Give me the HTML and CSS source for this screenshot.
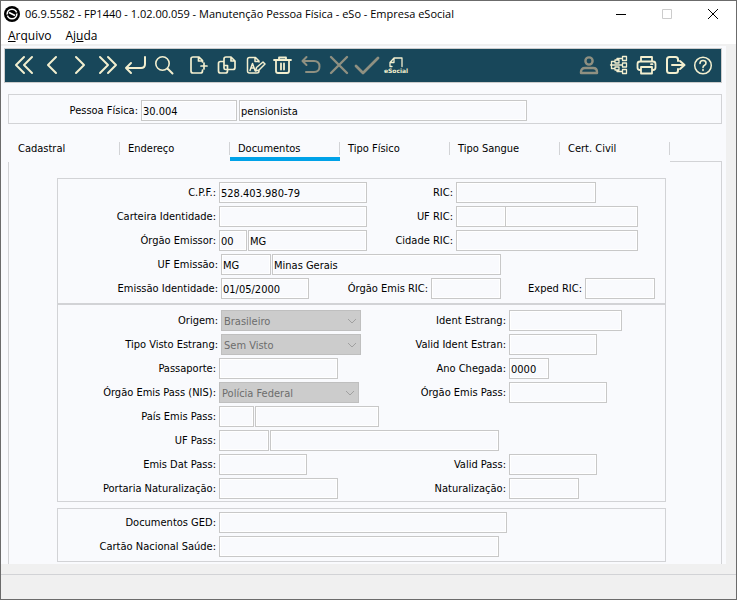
FILE: index.html
```html
<!DOCTYPE html>
<html lang="pt-BR">
<head>
    <meta charset="UTF-8">
    <meta name="viewport" content="width=device-width, initial-scale=1.0">
    <title>Manutenção Pessoa Física</title>
    <link rel="stylesheet" href="styles.css">
</head>
<body>

<div class="window">
    <!-- Title bar -->
    <header class="titlebar">
        <svg class="app-icon" width="16" height="16" viewBox="0 0 16 16">
            <circle cx="8" cy="8" r="8" fill="#000"/>
            <circle cx="8" cy="8" r="4.800" fill="none" stroke="#fff" stroke-width="1.600"/>
            <path d="M5 6.500l6 3" stroke="#fff" stroke-width="1.600"/>
            <path d="M11 7.500 14 6.500M5 8.500 2 9.500" stroke="#000" stroke-width="1.200"/>
        </svg>
        <h1>06.9.5582 - FP1440 - 1.02.00.059 - Manutenção Pessoa Física - eSo - Empresa eSocial</h1>
        <div class="window-buttons">
            <button type="button" aria-label="Minimizar"><svg width="12" height="12" viewBox="0 0 12 12"><path d="M1 6.5h10"/></svg></button>
            <button type="button" aria-label="Maximizar" disabled><svg width="12" height="12" viewBox="0 0 12 12"><path d="M1.5 1.5h9v9h-9z"/></svg></button>
            <button type="button" aria-label="Fechar"><svg width="12" height="12" viewBox="0 0 12 12"><path d="M1 1l10 10M11 1 1 11"/></svg></button>
        </div>
    </header>

    <nav class="menubar">
        <button type="button"><u>A</u>rquivo</button>
        <button type="button">Aj<u>u</u>da</button>
    </nav>

    <main class="client">
        <!-- Toolbar -->
        <div class="toolbar">
            <button type="button" aria-label="Primeiro"><svg viewBox="0 0 28 28"><path d="M14 6l-8 8 8 8M22 6l-8 8 8 8"/></svg></button>
            <button type="button" aria-label="Anterior"><svg viewBox="0 0 28 28"><path d="M18 6l-8 8 8 8"/></svg></button>
            <button type="button" aria-label="Próximo"><svg viewBox="0 0 28 28"><path d="M10 6l8 8-8 8"/></svg></button>
            <button type="button" aria-label="Último"><svg viewBox="0 0 28 28"><path d="M6 6l8 8-8 8M14 6l8 8-8 8"/></svg></button>
            <button type="button" aria-label="Vai para"><svg viewBox="0 0 28 28"><path d="M23 6v7q0 4-4 4H4M9 12l-5 5 5 5"/></svg></button>
            <button type="button" aria-label="Pesquisa"><svg viewBox="0 0 28 28"><circle cx="12.500" cy="12.500" r="6.700" stroke-width="1.600"/><path d="M17.500 17.500l5 5"/></svg></button>
            <span class="toolbar-gap"></span>
            <button type="button" aria-label="Inclui"><svg viewBox="0 0 28 28"><g stroke-width="1.700"><path d="M17.500 11V9.500L14 6H8Q6 6 6 8v12q0 2 2 2h7.500q2 0 2-2v-1M13.500 6v4h4M19 12v6M16 15h6"/></g></svg></button>
            <button type="button" aria-label="Copia"><svg viewBox="0 0 28 28"><g stroke-width="1.700"><path d="M11 10.500H7.500q-2 0-2 2V20q0 2 2 2h5q2 0 2-2v-1.500M12.500 18.500q-1.500 0-1.500-1.500V8q0-2 2-2h5l4 4v6.500q0 2-2 2zM18 6v4h4M11 11v3.500h3.500V18"/></g></svg></button>
            <button type="button" aria-label="Altera"><svg viewBox="0 0 28 28"><g stroke-width="1.500"><path d="M18 11V10l-3.500-3.500H8.500q-2 0-2 2V20q0 2 2 2H16q2 0 2-2v-1M14 6.500v4h4M9 19.500l2.500-7 2.500 7M10 17h3M14.500 20l1-3.500 6.500-5.500 2 2-6 6z"/></g></svg></button>
            <button type="button" aria-label="Elimina"><svg viewBox="0 0 28 28"><path d="M5 9h17M10 8V6.500h7V8M7 10v10q0 2 2 2h9q2 0 2-2V10M12 12.500v6M15 12.500v6" stroke-width="1.800"/></svg></button>
            <button type="button" aria-label="Desfaz" disabled><svg viewBox="0 0 28 28"><path d="M9.500 6 5.500 10l4 4M6 10h11q5.500 0 5.500 5.500T17 21H9"/></svg></button>
            <button type="button" aria-label="Cancela" disabled><svg viewBox="0 0 28 28"><g stroke-width="2.400"><path d="M6 6l16 16M22 6 6 22"/></g></svg></button>
            <button type="button" aria-label="Confirma" disabled><svg viewBox="0 0 28 28"><g stroke-width="2.800"><path d="M3 15l7 7L25 7"/></g></svg></button>
            <button type="button" aria-label="eSocial"><svg viewBox="0 0 28 28"><path d="M9 15.500v-4l4-4.500h8v8.500M13 7v4.500H9M9 15.500h2" stroke-width="1.300"/><text x="15" y="22" text-anchor="middle">eSocial</text></svg></button>
            <span class="toolbar-fill"></span>
            <button type="button" aria-label="Usuário" disabled><svg viewBox="0 0 28 28"><g stroke-width="2.400"><circle cx="12" cy="10" r="3.600"/><path d="M4 22v-1q0-4 4-4h8q4 0 4 4v1z"/></g></svg></button>
            <button type="button" aria-label="Estrutura"><svg viewBox="0 0 28 28"><g stroke-width="1.300"><path d="M17.500 5.500h4v4h-4zM17.500 12h4v4h-4zM17.500 18.500h4v4h-4zM10 9h4v3h-4zM10 16h4v3h-4zM10 10.500H6.500v7H10M5.500 14h12M12 9V7.500h5.500M12 19v1.500h5.500"/></g></svg></button>
            <button type="button" aria-label="Imprime"><svg viewBox="0 0 28 28"><path d="M8 10V6h11v4M8 19H7q-2.500 0-2.500-2.500V13q0-2.500 2.500-2.500h13q2.500 0 2.500 2.500v3.500Q22.500 19 20 19h-1M8 16h11v6.500H8zM18 13.200h1.500" stroke-width="1.800"/></svg></button>
            <button type="button" aria-label="Sair"><svg viewBox="0 0 28 28"><path d="M17 10V8.500Q17 6 14.500 6h-6Q6 6 6 8.500v11Q6 22 8.500 22h6q2.500 0 2.500-2.500V18M11 14h12M19 10l4.500 4-4.500 4"/></svg></button>
            <button type="button" aria-label="Ajuda"><svg viewBox="0 0 28 28"><circle cx="14" cy="14.500" r="8.300" stroke-width="1.500"/><path d="M11 12.500q0-3 3-3t3 2.500q0 1.500-1.500 2.300T14 16.500M14 18.500v1" stroke-width="1.600"/></svg></button>
        </div>

        <div class="person">
            <label for="pessoa">Pessoa Física:</label>
            <input id="pessoa" class="w-96" type="text" value="30.004">
            <input class="w-288" type="text" value="pensionista" aria-label="Nome">
        </div>

        <div class="tabs" role="tablist">
            <button type="button" role="tab">Cadastral</button>
            <button type="button" role="tab">Endereço</button>
            <button type="button" role="tab" class="active" aria-selected="true">Documentos</button>
            <button type="button" role="tab">Tipo Físico</button>
            <button type="button" role="tab">Tipo Sangue</button>
            <button type="button" role="tab">Cert. Civil</button>
            <span class="tabs-fill"></span>
        </div>

        <form class="tab-page">
            <!-- Identity -->
            <div class="group identity">
                <div class="row">
                    <div class="pair"><label for="cpf">C.P.F.:</label><input id="cpf" class="w-148" type="text" value="528.403.980-79"></div>
                    <label for="ric">RIC:</label>
                    <div class="fields"><input id="ric" class="w-140" type="text"></div>
                </div>
                <div class="row">
                    <div class="pair"><label for="carteira">Carteira Identidade:</label><input id="carteira" class="w-148" type="text"></div>
                    <label for="uf-ric">UF RIC:</label>
                    <div class="fields joined"><input id="uf-ric" class="w-50" type="text"><input class="w-133" type="text" aria-label="Nome UF RIC"></div>
                </div>
                <div class="row">
                    <div class="pair"><label for="orgao">Órgão Emissor:</label><input id="orgao" class="w-28" type="text" value="00"><input class="w-119" type="text" value="MG" aria-label="UF órgão emissor"></div>
                    <label for="cidade">Cidade RIC:</label>
                    <div class="fields"><input id="cidade" class="w-182" type="text"></div>
                </div>
                <div class="row">
                    <div class="pair wide"><label for="uf-emissao">UF Emissão:</label><input id="uf-emissao" class="w-50" type="text" value="MG"><input class="w-229" type="text" value="Minas Gerais" aria-label="Nome UF emissão"></div>
                </div>
                <div class="row dates">
                    <div class="pair wide"><label for="emissao">Emissão Identidade:</label><input id="emissao" class="w-88" type="text" value="01/05/2000"></div>
                    <label for="orgao-ric">Órgão Emis RIC:</label>
                    <input id="orgao-ric" class="w-70" type="text">
                    <label for="exped">Exped RIC:</label>
                    <input id="exped" class="w-70" type="text">
                </div>
            </div>

            <!-- Foreigner / passport -->
            <div class="group passport">
                <div class="row">
                    <div class="pair wide">
                        <label for="origem">Origem:</label>
                        <div class="select"><select id="origem" disabled><option>Brasileiro</option></select><svg width="10" height="6" viewBox="0 0 10 6"><path d="M1 1l4 4 4-4"/></svg></div>
                    </div>
                    <label for="ident">Ident Estrang:</label>
                    <div class="fields"><input id="ident" class="w-113" type="text"></div>
                </div>
                <div class="row">
                    <div class="pair wide">
                        <label for="visto">Tipo Visto Estrang:</label>
                        <div class="select"><select id="visto" disabled><option>Sem Visto</option></select><svg width="10" height="6" viewBox="0 0 10 6"><path d="M1 1l4 4 4-4"/></svg></div>
                    </div>
                    <label for="valid-ident">Valid Ident Estran:</label>
                    <div class="fields"><input id="valid-ident" class="w-88" type="text"></div>
                </div>
                <div class="row">
                    <div class="pair"><label for="passaporte">Passaporte:</label><input id="passaporte" class="w-119" type="text"></div>
                    <label for="chegada">Ano Chegada:</label>
                    <div class="fields"><input id="chegada" class="w-40" type="text" value="0000"></div>
                </div>
                <div class="row">
                    <div class="pair">
                        <label for="nis">Órgão Emis Pass (NIS):</label>
                        <div class="select"><select id="nis" disabled><option>Polícia Federal</option></select><svg width="10" height="6" viewBox="0 0 10 6"><path d="M1 1l4 4 4-4"/></svg></div>
                    </div>
                    <label for="orgao-pass">Órgão Emis Pass:</label>
                    <div class="fields"><input id="orgao-pass" class="w-98" type="text"></div>
                </div>
                <div class="row">
                    <div class="pair"><label for="pais">País Emis Pass:</label><input id="pais" class="w-35" type="text"><input class="w-124" type="text" aria-label="Nome do país"></div>
                </div>
                <div class="row">
                    <div class="pair"><label for="uf-pass">UF Pass:</label><input id="uf-pass" class="w-50" type="text"><input class="w-229" type="text" aria-label="Nome UF pass"></div>
                </div>
                <div class="row">
                    <div class="pair"><label for="emis-pass">Emis Dat Pass:</label><input id="emis-pass" class="w-88" type="text"></div>
                    <label for="valid-pass">Valid Pass:</label>
                    <div class="fields"><input id="valid-pass" class="w-88" type="text"></div>
                </div>
                <div class="row">
                    <div class="pair"><label for="portaria">Portaria Naturalização:</label><input id="portaria" class="w-119" type="text"></div>
                    <label for="natural">Naturalização:</label>
                    <div class="fields"><input id="natural" class="w-70" type="text"></div>
                </div>
            </div>

            <div class="group health">
                <div class="row">
                    <div class="pair"><label for="ged">Documentos GED:</label><input id="ged" class="w-288" type="text"></div>
                </div>
                <div class="row">
                    <div class="pair"><label for="cns">Cartão Nacional Saúde:</label><input id="cns" class="w-280" type="text"></div>
                </div>
            </div>
        </form>
    </main>

    <footer class="statusbar"></footer>
</div>

</body>
</html>
```
FILE: styles.css
```css
* {
    box-sizing: border-box;
}
body {
    margin: 0;
    font-family: "DejaVu Sans Condensed", "DejaVu Sans", sans-serif;
    font-size: 11px;
    color: #000;
}
button, input, select {
    font: inherit;
    color: inherit;
    margin: 0;
}
button {
    background: none;
    border: none;
    padding: 0;
}
.window {
    display: flex;
    flex-direction: column;
    min-height: 100vh;
    border: 1px solid #6b6b6b;
    background: #f0f0f0;
}

/* Title and menu */
.titlebar {
    display: flex;
    align-items: center;
    height: 25px;
    padding-left: 3px;
    gap: 5px;
    background: #fff;
}
.titlebar h1 {
    flex: 1;
    margin: 0;
    font-family: "Open Sans", sans-serif;
    font-size: 11px;
    font-weight: 400;
    white-space: nowrap;
}
.window-buttons {
    display: flex;
}
.window-buttons button {
    display: flex;
    justify-content: center;
    width: 46px;
}
.window-buttons path {
    fill: none;
    stroke: #000;
}
.window-buttons button:disabled path {
    stroke: #ccc;
}
.menubar {
    display: flex;
    gap: 14px;
    height: 18px;
    padding-left: 7px;
    background: #fff;
    font-family: "Open Sans", sans-serif;
    font-size: 12px;
    line-height: 20px;
}

/* Client area */
.client {
    margin: 2px 10px 0 0;
    padding: 2px 4px 0 3px;
    background: #f9fafd;
}
.toolbar {
    display: flex;
    align-items: flex-start;
    height: 35px;
    padding: 2px 4px 0 5px;
    border: 1px solid #ccc;
    background: #18475a;
}
.toolbar button {
    width: 28px;
    height: 28px;
    color: #f3efcf;
}
.toolbar button:disabled {
    color: #8f9081;
}
.toolbar svg {
    display: block;
    fill: none;
    stroke: currentColor;
    stroke-width: 2;
    stroke-linecap: round;
    stroke-linejoin: round;
}
.toolbar text {
    fill: currentColor;
    stroke: none;
    font: bold 6px "DejaVu Sans", sans-serif;
}
.toolbar-gap {
    width: 7px;
}
.toolbar-fill {
    flex: 1;
}

input {
    height: 21px;
    padding: 2px 2px 0 1px;
    border: 1px solid #c8c8c8;
    border-radius: 0;
    background: #f9fafd;
    box-shadow: inset 0 0 0 1px #fff;
}
label {
    padding-right: 3px;
    text-align: right;
    white-space: nowrap;
}
.person {
    display: flex;
    align-items: center;
    height: 30px;
    margin: 11px 0 0 4px;
    padding-top: 3px;
    border: 1px solid #d2d3d6;
}
.person label {
    width: 132px;
}
.person input + input {
    margin-left: 2px;
}

/* Tabs */
.tabs {
    display: flex;
    height: 20px;
    margin: 18px 0 0 4px;
}
.tabs button {
    display: flex;
    width: 110px;
    height: 19px;
    padding-left: 8px;
    border-bottom: 4px solid transparent;
    line-height: 13px;
}
.tabs button:first-child {
    width: 112px;
    padding-left: 10px;
}
.tabs button::after {
    content: "";
    height: 13px;
    margin-left: auto;
    border-right: 1px solid #d2d3d6;
}
.tabs .active {
    border-color: #00a2e8;
}
.tabs-fill {
    flex: 1;
    border-bottom: 1px solid #d2d3d6;
}
.tab-page {
    margin-left: 4px;
    padding: 16px 55px 2px 48px;
    border: solid #d2d3d6;
    border-width: 0 1px;
}

/* Field groups */
.group {
    display: grid;
    gap: 3px;
    border: 1px solid #d2d3d6;
    padding: 3px 0 4px;
}
.passport {
    padding: 5px 0 2px;
    margin-bottom: 6px;
}
.row {
    display: grid;
    align-items: center;
    height: 21px;
}
.identity .row {
    grid-template-columns: 310px 88px 1fr;
}
.passport .row {
    grid-template-columns: 322px 129px 1fr;
}
.identity .dates {
    grid-template-columns: 252px 121px 70px 84px 70px;
}
.pair {
    display: flex;
    align-items: center;
}
.pair label {
    flex: none;
    width: 161px;
}
.pair.wide label {
    width: 163px;
}
.pair input {
    flex: none;
}
.pair input + input {
    margin-left: 1px;
}
.fields {
    display: flex;
}
.joined input + input {
    margin-left: -1px;
}

.select {
    position: relative;
    width: 140px;
}
.select select {
    display: block;
    width: 100%;
    height: 21px;
    padding: 1px 2px 0 2px;
    border: 1px solid #bfbfbf;
    border-radius: 0;
    background: #ccc;
    color: #6d6d6d;
    opacity: 1;
    appearance: none;
}
.select svg {
    position: absolute;
    right: 4px;
    top: 8px;
    fill: none;
    stroke: #a0a0a0;
}

.w-28 { width: 28px; }
.w-35 { width: 35px; }
.w-40 { width: 40px; }
.w-50 { width: 50px; }
.w-70 { width: 70px; }
.w-88 { width: 88px; }
.w-96 { width: 96px; }
.w-98 { width: 98px; }
.w-113 { width: 113px; }
.w-119 { width: 119px; }
.w-124 { width: 124px; }
.w-133 { width: 133px; }
.w-140 { width: 140px; }
.w-148 { width: 148px; }
.w-182 { width: 182px; }
.w-229 { width: 229px; }
.w-280 { width: 280px; }
.w-288 { width: 288px; }

.statusbar {
    flex: 1;
    margin-top: 10px;
    border-top: 1px solid #d2d3d6;
}
```
